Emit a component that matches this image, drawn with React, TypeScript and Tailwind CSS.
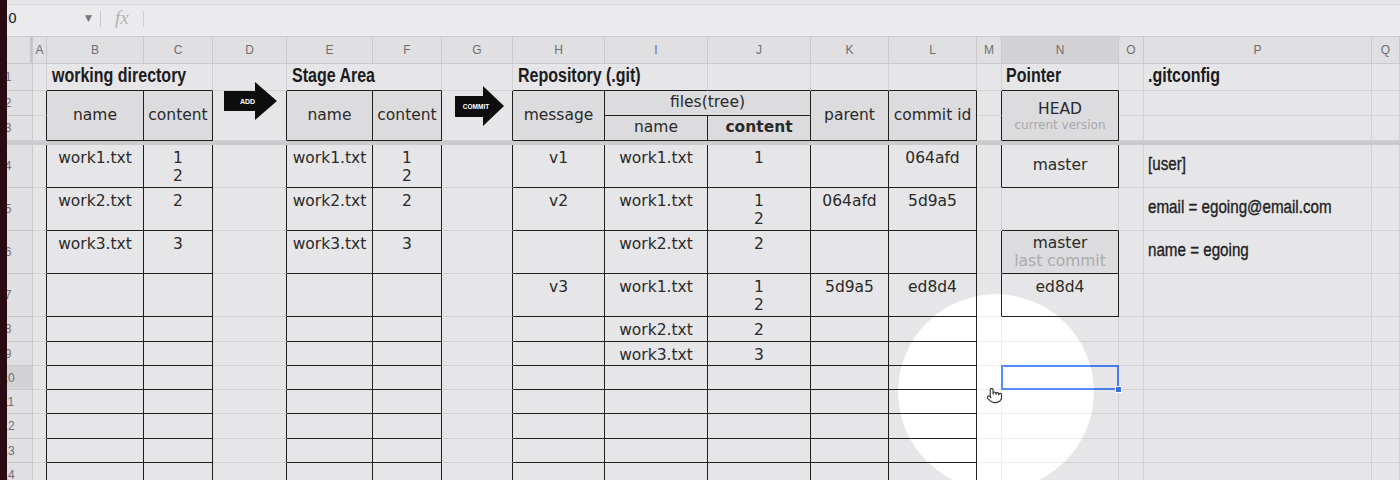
import type { ReactNode } from "react";
import { Pointer } from "lucide-react";

const cols = ["A", "B", "C", "D", "E", "F", "G", "H", "I", "J", "K", "L", "M", "N", "O", "P", "Q"];

// no condensed family installed, so squeeze Liberation Sans horizontally
const titleText = "inline-block origin-left scale-x-[0.8] whitespace-nowrap font-['Liberation_Sans',sans-serif] font-bold text-[20px] leading-none text-[#1c1c1c]";
const narrowText = "inline-block origin-left scale-x-[0.82] whitespace-nowrap font-['Liberation_Sans',sans-serif] text-[18.5px] leading-none text-[#222] [-webkit-text-stroke:0.35px_#222]";

type Cell = { c: string; cs?: number; rs?: number; node?: ReactNode; look?: string };

function isTable(c: string | undefined, r: number) {
  if (!c || r < 2) return false;
  if ("BCEFHIJKL".includes(c)) return true;
  if (c === "N") return r === 2 || r === 3 || r === 4 || r === 6 || r === 7;
  return false;
}

function borders(c: string, r: number, cs = 1, rs = 1) {
  const first = cols.indexOf(c);
  const last = first + cs - 1;
  let darkR = false;
  let darkB = false;
  for (let rr = r; rr < r + rs; rr++) {
    if (isTable(cols[last], rr) || isTable(cols[last + 1], rr)) darkR = true;
  }
  for (let ci = first; ci <= last; ci++) {
    if (isTable(cols[ci], r + rs - 1) || isTable(cols[ci], r + rs)) darkB = true;
  }
  return [darkR ? "border-r-[#1f1f1f]" : "border-r-[#d2d1d4]", darkB ? "border-b-[#1f1f1f]" : "border-b-[#d2d1d4]"].join(" ");
}

const head = "flex items-center justify-center bg-[#dcdbde] text-[15.5px]";
const data = "whitespace-pre-line pt-[4px] text-center text-[15.5px] leading-[18px]";
const titleCell = "flex items-center pl-[5px] pb-[5px]";

function Title({ children }: { children: ReactNode }) {
  return <span className={titleText}>{children}</span>;
}

function Arrow({ label, commit }: { label: string; commit?: boolean }) {
  if (commit) {
    return (
      <svg className="absolute left-[13px] top-[-5px]" width="50" height="40" viewBox="0 0 50 40">
        <polygon points="0,10 28,10 28,0 49,20 28,40 28,31 0,31" fill="#0d0d0d" />
        <text x="21" y="22.5" fill="#fff" fontSize="6.5" fontWeight="700" textAnchor="middle" fontFamily="Liberation Sans, sans-serif">
          {label}
        </text>
      </svg>
    );
  }
  return (
    <svg className="absolute left-[11px] top-[-9px]" width="54" height="38" viewBox="0 0 54 38">
      <polygon points="0,9 31,9 31,0 53,19 31,38 31,29 0,29" fill="#0d0d0d" />
      <text x="23.5" y="21.5" fill="#fff" fontSize="7" fontWeight="700" textAnchor="middle" fontFamily="Liberation Sans, sans-serif">
        {label}
      </text>
    </svg>
  );
}

const body: Record<string, string> = {
  B4: "work1.txt", C4: "1\n2", E4: "work1.txt", F4: "1\n2", H4: "v1", I4: "work1.txt", J4: "1", L4: "064afd",
  B5: "work2.txt", C5: "2", E5: "work2.txt", F5: "2", H5: "v2", I5: "work1.txt", J5: "1\n2", K5: "064afd", L5: "5d9a5",
  B6: "work3.txt", C6: "3", E6: "work3.txt", F6: "3", I6: "work2.txt", J6: "2",
  H7: "v3", I7: "work1.txt", J7: "1\n2", K7: "5d9a5", L7: "ed8d4", N7: "ed8d4",
  I8: "work2.txt", J8: "2", I9: "work3.txt", J9: "3",
};

const conf: Record<number, string> = { 4: "[user]", 5: "email = egoing@email.com", 6: "name = egoing" };

const rowsTop: Cell[][] = [
  [
    { c: "A" },
    { c: "B", cs: 2, node: <Title>working directory</Title>, look: titleCell },
    { c: "D" },
    { c: "E", cs: 2, node: <Title>Stage Area</Title>, look: titleCell },
    { c: "G" },
    { c: "H", cs: 2, node: <Title>Repository (.git)</Title>, look: titleCell },
    { c: "J" }, { c: "K" }, { c: "L" }, { c: "M" },
    { c: "N", node: <Title>Pointer</Title>, look: "flex items-center pl-[4px] pb-[5px]" },
    { c: "O" },
    { c: "P", node: <Title>.gitconfig</Title>, look: "flex items-center pl-[4px] pb-[5px]" },
    { c: "Q" },
  ],
  [
    { c: "A" },
    { c: "B", rs: 2, node: "name", look: head },
    { c: "C", rs: 2, node: "content", look: head },
    { c: "D", rs: 2, node: <Arrow label="ADD" />, look: "relative" },
    { c: "E", rs: 2, node: "name", look: head },
    { c: "F", rs: 2, node: "content", look: head },
    { c: "G", rs: 2, node: <Arrow label="COMMIT" commit />, look: "relative" },
    { c: "H", rs: 2, node: "message", look: head },
    { c: "I", cs: 2, node: "files(tree)", look: head },
    { c: "K", rs: 2, node: "parent", look: head },
    { c: "L", rs: 2, node: "commit id", look: head },
    { c: "M" },
    {
      c: "N",
      rs: 2,
      look: "flex flex-col items-center justify-center bg-[#dcdbde]",
      node: (
        <>
          <span className="text-[15.5px] leading-[18px]">HEAD</span>
          <span className="text-[12px] leading-[14px] text-[#a9a9ac]">current version</span>
        </>
      ),
    },
    { c: "O" }, { c: "P" }, { c: "Q" },
  ],
  [
    { c: "A" },
    { c: "I", node: "name", look: head },
    { c: "J", node: "content", look: `${head} font-bold` },
    { c: "M" }, { c: "O" }, { c: "P" }, { c: "Q" },
  ],
];

function bodyRow(r: number): Cell[] {
  return cols.map((c) => {
    const key = `${c}${r}`;
    if (c === "P" && conf[r])
      return { c, node: <span className={narrowText}>{conf[r]}</span>, look: "flex items-center pl-[4px] pb-[4px]" };
    if (key === "N4") return { c, node: "master", look: "flex items-center justify-center text-[15.5px]" };
    if (key === "N6")
      return {
        c,
        look: "flex flex-col items-center justify-center bg-[#dcdbde] text-[15.5px] leading-[18px]",
        node: (
          <>
            <span>master</span>
            <span className="text-[#ababae]">last commit</span>
          </>
        ),
      };
    if (key === "N10")
      return {
        c,
        look: "relative",
        node: (
          <div className="absolute -left-px -top-px right-[-1px] bottom-[-1px] border-2 border-[#4a7de6]">
            <div className="absolute -right-[5px] -bottom-[5px] h-[7px] w-[7px] border border-white bg-[#3d6fe0]" />
          </div>
        ),
      };
    return { c, node: body[key], look: data };
  });
}

function Sheet() {
  const rows: Cell[][] = [...rowsTop];
  for (let r = 4; r <= 14; r++) rows.push(bodyRow(r));

  return (
    <div className="grid grid-cols-[26px_14px_97px_69px_74px_86px_69px_71px_92px_103px_103px_78px_88px_25px_117px_25px_228px_28px] grid-rows-[27px_27px_25px_25px_4px_43px_43px_43px_43px_25px_24px_24px_24px_25px_24px_24px]">
      <div className="border-r-[3px] border-b border-[#c6c6c9] bg-[#e0dfe2]" />
      {cols.map((c) => (
        <div
          key={c}
          className={`flex items-center justify-center border-r border-b border-[#c9c8cb] font-['Liberation_Sans',sans-serif] text-[12px] text-[#6f6f72] ${c === "N" ? "bg-[#d3d2d5]" : "bg-[#e0dfe2]"}`}
        >
          {c}
        </div>
      ))}
      {rows.map((row, i) => {
        const r = i + 1;
        const cells = row.map((cell) => (
          <div
            key={`${cell.c}${r}`}
            className={`border-r border-b ${cell.cs === 2 ? "col-span-2" : ""} ${cell.rs === 2 ? "row-span-2" : ""} ${borders(cell.c, r, cell.cs, cell.rs)} ${cell.look ?? ""}`}
          >
            {cell.node}
          </div>
        ));
        const rowHead = (
          <div
            key={`h${r}`}
            className={`flex items-center border-r border-b border-[#c9c8cb] ${r === 10 ? "bg-[#d3d2d5]" : "bg-[#e0dfe2]"}`}
          >
            <span className="-ml-[22px] w-[46px] text-center font-['Liberation_Sans',sans-serif] text-[12px] text-[#6f6f72]">{r}</span>
          </div>
        );
        return [
          rowHead,
          ...cells,
          ...(r === 3 ? [<div key="freeze" className="col-span-full bg-[#cbcacd]" />] : []),
        ];
      })}
    </div>
  );
}

export default function App() {
  return (
    <div className="flex h-[480px] w-[1400px] overflow-hidden bg-[#e6e5e8] font-['DejaVu_Sans',Verdana,sans-serif] text-[#2a2a2a]">
      <div className="relative z-10 w-[7px] shrink-0 bg-[#2a0b14]" />
      <div className="relative flex-1">
        <div className="h-[33px] border-b border-[#cbcbce] bg-[#ebeaed]">
          <div className="mt-[4px] flex h-[28px] items-center border-t border-[#d7d7da]">
            <div className="flex w-[93px] items-center">
              <span className="pl-[1px] text-[14px] text-[#222]">0</span>
              <span className="ml-auto mr-[8px] text-[9px] text-[#777]">▼</span>
            </div>
            <div className="h-[16px] w-px bg-[#c9c9cc]" />
            <span className="ml-[14px] font-['Liberation_Serif',serif] text-[19px] italic text-[#b3b3b6]">fx</span>
            <div className="ml-[14px] h-[16px] w-px bg-[#d0d0d3]" />
          </div>
        </div>
        <Sheet />
        <div className="pointer-events-none absolute left-[891px] top-[294px] h-[196px] w-[196px] rounded-full backdrop-brightness-[1.13] [mask-image:radial-gradient(circle,#000_84%,transparent_100%)]" />
        <Pointer className="pointer-events-none absolute left-[979px] top-[387px] h-[17px] w-[17px] fill-white text-[#333]" strokeWidth={1.6} />
      </div>
    </div>
  );
}
